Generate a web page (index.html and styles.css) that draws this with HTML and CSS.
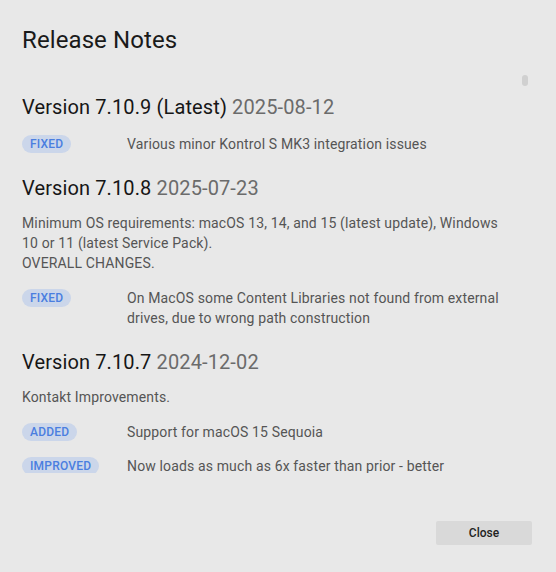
FILE: index.html
```html
<!DOCTYPE html>
<html lang="en">
  <head>
    <meta charset="UTF-8" />
    <meta name="viewport" content="width=device-width, initial-scale=1.0" />
    <title>Release Notes</title>
    <link rel="stylesheet" href="styles.css">
  </head>
  <body>
    <div class="dialog">
      <h1 class="dialog-title">Release Notes</h1>

      <div class="notes-wrap">
        <div class="notes">
          <section class="release">
            <h2>Version 7.10.9 (Latest) <span class="date">2025-08-12</span></h2>
            <div class="change">
              <span class="tag">FIXED</span>
              <span class="change-text">Various minor Kontrol S MK3 integration issues</span>
            </div>
          </section>

          <section class="release">
            <h2>Version 7.10.8 <span class="date">2025-07-23</span></h2>
            <p class="summary">
              Minimum OS requirements: macOS 13, 14, and 15 (latest update), Windows 10 or 11 (latest Service Pack).<br />
              OVERALL CHANGES.
            </p>
            <div class="change">
              <span class="tag">FIXED</span>
              <span class="change-text">On MacOS some Content Libraries not found from external drives, due to wrong path construction</span>
            </div>
          </section>

          <section class="release">
            <h2>Version 7.10.7 <span class="date">2024-12-02</span></h2>
            <p class="summary">Kontakt Improvements.</p>
            <div class="change">
              <span class="tag">ADDED</span>
              <span class="change-text">Support for macOS 15 Sequoia</span>
            </div>
            <div class="change">
              <span class="tag">IMPROVED</span>
              <span class="change-text">Now loads as much as 6x faster than prior - better</span>
            </div>
          </section>
        </div>
        <div class="scroll-thumb"></div>
      </div>

      <div class="dialog-actions">
        <button class="close-btn">Close</button>
      </div>
    </div>
  </body>
</html>
```

FILE: styles.css
```css
body {
  margin: 0;
  background: #e8e8e8;
  font-family: Roboto, "Liberation Sans", sans-serif;
  height: 100vh;
  overflow: hidden;
}
.dialog {
  padding: 24px 24px 0 22px;
}
.dialog-title {
  margin: 0;
  font-size: 24px;
  line-height: 32px;
  font-weight: 400;
  color: #1a1a1a;
  letter-spacing: 0.1px;
}
.notes-wrap {
  position: relative;
  margin-top: 16px;
  height: 401px;
  overflow: hidden;
}
.notes {
  padding: 21px 30px 0 0;
}
.release {
  margin-bottom: 20px;
}
.release h2 {
  margin: 0 0 11px;
  font-size: 20px;
  line-height: 28px;
  font-weight: 400;
  color: #161616;
  letter-spacing: 0.12px;
}
.release h2 + .change {
  margin-top: 13px;
}
.date {
  color: #6b6b6b;
}
.summary {
  margin: 0 0 15px;
  font-size: 14px;
  line-height: 20px;
  color: #555;
  letter-spacing: 0.14px;
}
.change {
  display: grid;
  grid-template-columns: 105px 1fr;
  font-size: 14px;
  line-height: 20px;
  color: #555;
  letter-spacing: 0.14px;
  margin-bottom: 14px;
}
.change:last-child {
  margin-bottom: 0;
}
.tag {
  justify-self: start;
  margin-top: 1px;
  height: 18px;
  line-height: 18px;
  padding: 0 8px;
  border-radius: 9px;
  background: #cbd6ea;
  color: #4a7ee0;
  font-size: 12px;
  font-weight: 500;
  letter-spacing: 0.2px;
}
.scroll-thumb {
  position: absolute;
  top: 3px;
  right: 4px;
  width: 6px;
  height: 11px;
  border-radius: 3px;
  background: #d0d0d0;
}
.dialog-actions {
  display: flex;
  justify-content: flex-end;
  padding-top: 48px;
}
.close-btn {
  width: 96px;
  height: 24px;
  border: none;
  border-radius: 2px;
  background: #d9d9d9;
  color: #222;
  font-family: Roboto, "Liberation Sans", sans-serif;
  font-size: 12px;
  font-weight: 500;
  cursor: pointer;
}
```
